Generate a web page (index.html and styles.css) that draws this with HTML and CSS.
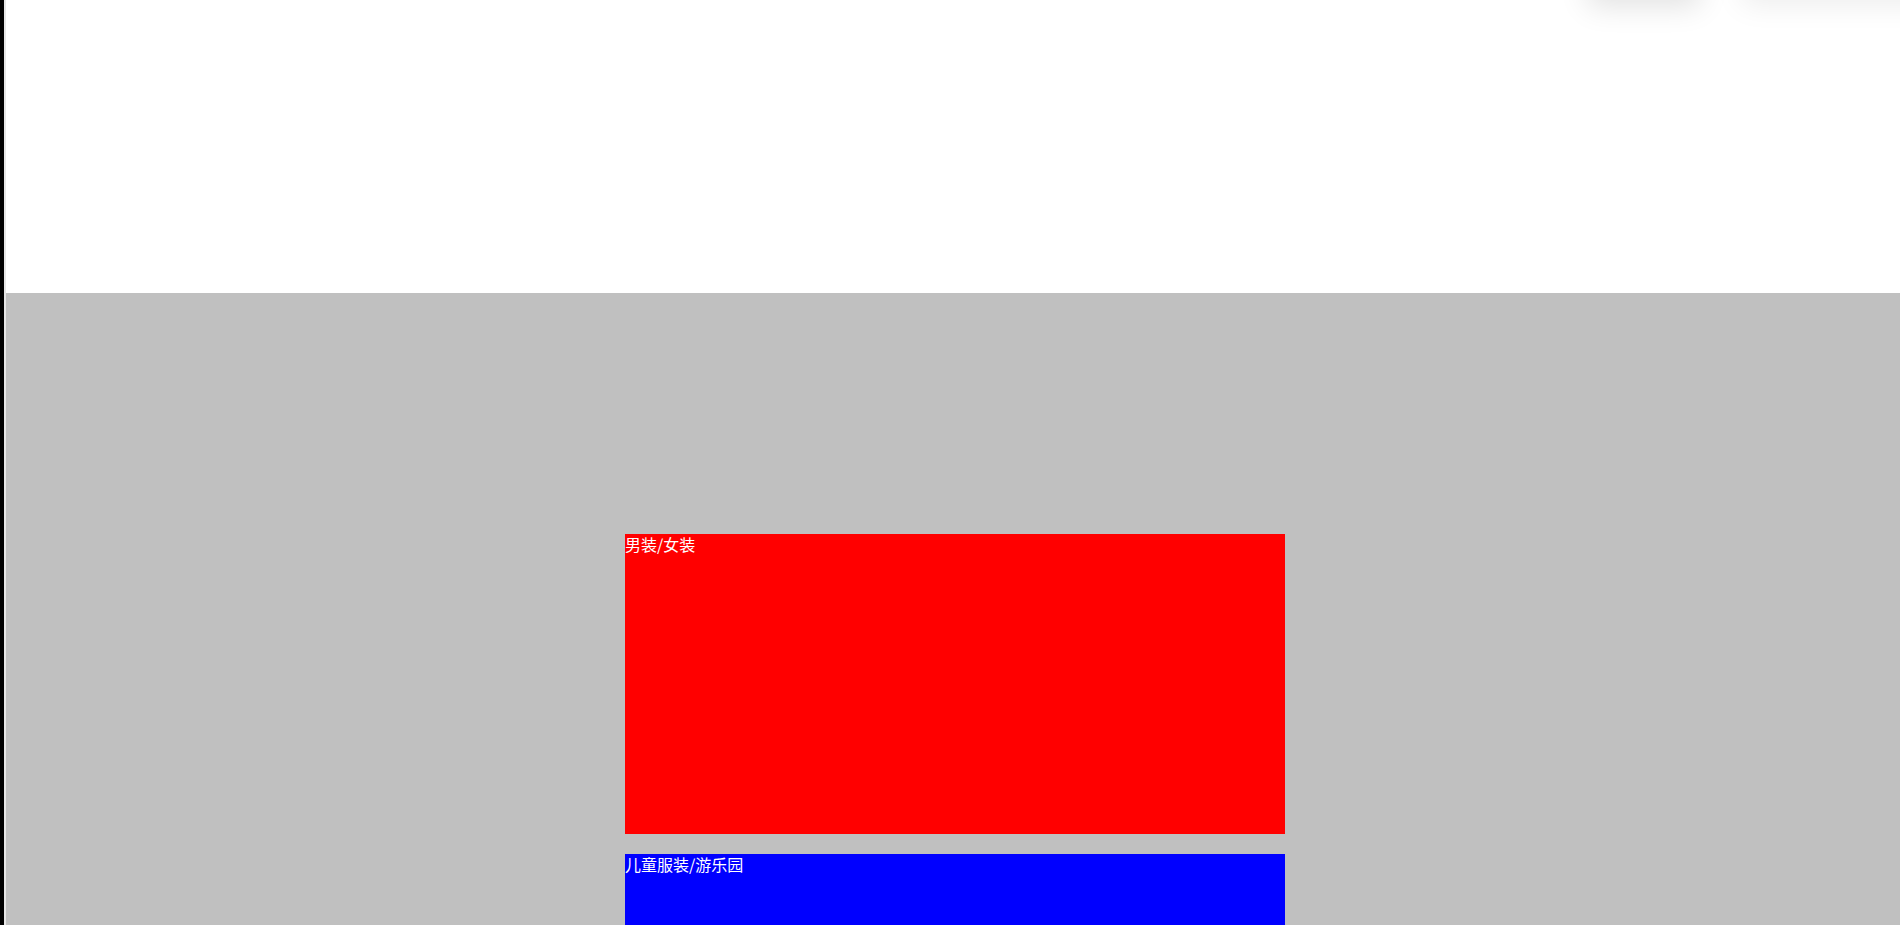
FILE: index.html
```html
<!DOCTYPE html>
<html lang="zh">
<head>
<meta charset="utf-8">
<title>页面</title>
<link rel="stylesheet" href="styles.css">
</head>
<body>
<div class="page">
  <header class="header">
    <div class="shadow-box shadow-a"></div>
    <div class="shadow-box shadow-b"></div>
  </header>
  <main class="main">
    <div class="column">
      <section class="block block-red">男装/女装</section>
      <section class="block block-blue">儿童服装/游乐园</section>
    </div>
  </main>
</div>
</body>
</html>
```
FILE: styles.css
```css
html, body {
  margin: 0;
  padding: 0;
  height: 100%;
  overflow: hidden;
  background: #ffffff;
}
.page {
  height: 100%;
  border-left: 4px solid #000000;
  box-sizing: border-box;
  display: flex;
  flex-direction: column;
}
.header {
  height: 293px;
  flex: none;
  background: #ffffff;
  border-left: 2px solid #e6e6e6;
  position: relative;
  overflow: hidden;
}
.shadow-box {
  position: absolute;
  top: -40px;
  height: 40px;
  background: #ffffff;
}
.shadow-a {
  left: 1588px;
  width: 100px;
  box-shadow: 0 0 30px 6px rgba(0, 0, 0, 0.12);
}
.shadow-b {
  left: 1740px;
  width: 200px;
  box-shadow: 0 0 30px 4px rgba(0, 0, 0, 0.08);
}
.main {
  flex: 1;
  background: #c0c0c0;
  border-left: 2px solid #e6e6e6;
  padding-top: 241px;
}
.column {
  width: 660px;
  margin-left: 619px;
  display: flex;
  flex-direction: column;
  gap: 20px;
}
.block {
  height: 300px;
  color: #ffffff;
  font-family: "Noto Sans CJK SC", "Liberation Sans", sans-serif;
  font-size: 16px;
  line-height: 20px;
}
.block-red {
  background: #ff0000;
}
.block-blue {
  background: #0000ff;
}
```
